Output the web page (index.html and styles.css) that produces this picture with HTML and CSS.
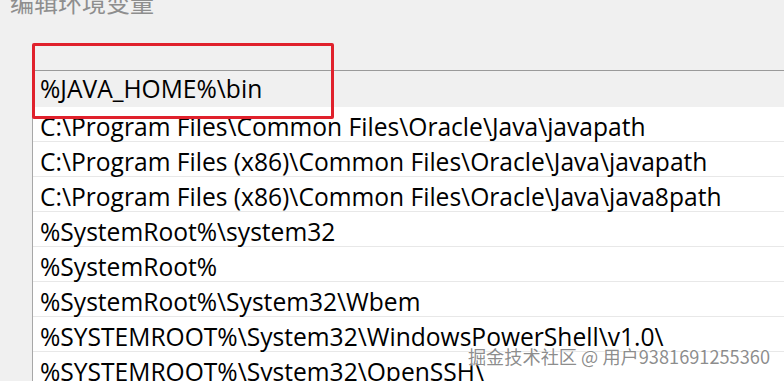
FILE: index.html
```html
<!DOCTYPE html>
<html lang="zh">
<head>
<meta charset="utf-8">
<link rel="stylesheet" href="styles.css">
</head>
<body>
<div class="page">
  <div class="title">编辑环境变量</div>
  <div class="list-wrap">
    <div class="list">
      <div class="row row-edit">%JAVA_HOME%\bin</div>
      <div class="row">C:\Program Files\Common Files\Oracle\Java\javapath</div>
      <div class="row">C:\Program Files (x86)\Common Files\Oracle\Java\javapath</div>
      <div class="row">C:\Program Files (x86)\Common Files\Oracle\Java\java8path</div>
      <div class="row">%SystemRoot%\system32</div>
      <div class="row">%SystemRoot%</div>
      <div class="row">%SystemRoot%\System32\Wbem</div>
      <div class="row">%SYSTEMROOT%\System32\WindowsPowerShell\v1.0\</div>
      <div class="row">%SYSTEMROOT%\System32\OpenSSH\</div>
    </div>
  </div>
  <div class="highlight"></div>
  <div class="watermark">掘金技术社区 @ 用户9381691255360</div>
</div>
</body>
</html>
```

FILE: styles.css
```css
html, body {
  margin: 0;
  padding: 0;
  width: 784px;
  height: 381px;
  overflow: hidden;
  background: #f0f0f0;
}

.page {
  position: relative;
  width: 784px;
  height: 381px;
  overflow: hidden;
  font-family: "Open Sans", "Noto Sans", "Noto Sans CJK SC", sans-serif;
}

.title {
  font-family: "Noto Sans CJK SC", sans-serif;
  font-size: 24px;
  line-height: 30px;
  color: #8e8e8e;
  margin: -13px 0 0 10px;
  height: 30px;
}

.list-wrap {
  margin-top: 53px;
  margin-left: 32px;
}

.list {
  border-top: 1px solid #9a9a9a;
  border-left: 1px solid #a8a8a8;
}

.row {
  height: 28px;
  padding-top: 6px;
  line-height: 28px;
  padding-left: 7px;
  font-size: 24.6px;
  color: #000;
  background: #fff;
  border-bottom: 1px solid #e8e8e8;
  white-space: nowrap;
}

.row-edit {
  height: 32px;
  padding-top: 4px;
  background: #f0f0f0;
  border-bottom: none;
}

.highlight {
  position: absolute;
  left: 32px;
  top: 43px;
  width: 296px;
  height: 70px;
  border: 3px solid #e0212c;
  border-radius: 2px;
}

.watermark {
  position: absolute;
  right: 14px;
  top: 344px;
  font-family: "Noto Sans CJK SC", sans-serif;
  font-size: 18.2px;
  line-height: 24px;
  color: rgba(120, 120, 120, 0.85);
  text-shadow: 0 0 2px #fff, 0 0 1px #fff;
  white-space: nowrap;
}
```
